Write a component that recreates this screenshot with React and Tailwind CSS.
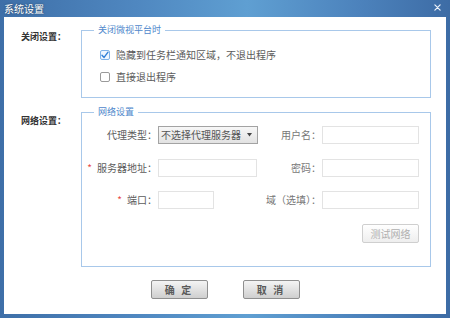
import React from "react";

const font = { fontFamily: '"Noto Sans CJK SC", "Noto Sans", sans-serif' };

function Field({ w }) {
  return <div className={`h-[18px] border border-[#e3e3e3] bg-white ${w}`} />;
}

function Star() {
  return <span className="text-[#e84a4a] mr-[5px]">*</span>;
}

export default function App() {
  return (
    <div
      className="w-[450px] h-[318px] flex flex-col bg-[linear-gradient(90deg,#3e6fa8_0%,#4f87c0_30%,#5f9fd2_55%,#4c82bc_80%,#3d6ca5_100%)] overflow-hidden"
      style={font}
    >
      {/* title bar */}
      <div className="h-[17px] flex items-center justify-between pl-[4px] pr-[9px]">
        <span className="text-[10px] leading-[12px] text-white [text-shadow:0_0_2px_rgba(0,0,0,0.5)]">系统设置</span>
        <svg width="7" height="7" viewBox="0 0 8 8" className="mt-[-3px]">
          <path d="M1 1 L7 7 M7 1 L1 7" stroke="#eef3fa" strokeWidth="1.4" strokeLinecap="round" />
        </svg>
      </div>

      {/* content */}
      <div className="mx-[4px] h-[297px] bg-white flex flex-col pt-[6px] text-[#5c5c5c]">
        {/* section 1 */}
        <div className="flex">
          <div className="w-[77px] pl-[17px] mt-[7px] text-[9px] leading-[14px] font-bold text-[#333]">关闭设置：</div>
          <fieldset className="w-[350px] border border-[#a8c8ea] pb-[12px]">
            <legend className="ml-[12px] px-[4px] text-[9px] leading-[14px] text-[#4f88cc]">关闭微视平台时</legend>
            <div className="mt-[10px] pl-[18px] h-[16px] flex items-center gap-[6px]">
              <div className="w-[10px] h-[10px] rounded-[2px] border border-[#7fb3e8] bg-[#eef6ff] flex items-center justify-center">
                <svg width="8" height="8" viewBox="0 0 8 8">
                  <path d="M1 4.2 L3.1 6.4 L7 1.2" stroke="#2f7fd6" strokeWidth="1.4" fill="none" strokeLinecap="round" strokeLinejoin="round" />
                </svg>
              </div>
              <span className="text-[10px] leading-[14px]">隐藏到任务栏通知区域，不退出程序</span>
            </div>
            <div className="mt-[6px] pl-[18px] h-[16px] flex items-center gap-[6px]">
              <div className="w-[10px] h-[10px] rounded-[2px] border border-[#9a9a9a] bg-white" />
              <span className="text-[10px] leading-[14px]">直接退出程序</span>
            </div>
          </fieldset>
        </div>

        {/* section 2 */}
        <div className="flex mt-[7px]">
          <div className="w-[77px] pl-[17px] mt-[9px] text-[9px] leading-[14px] font-bold text-[#333]">网络设置：</div>
          <fieldset className="w-[350px] border border-[#a8c8ea] pb-[23px]">
            <legend className="ml-[12px] px-[4px] text-[9px] leading-[14px] text-[#4f88cc]">网络设置</legend>
            <div className="text-[10px] leading-[14px]">
              <div className="mt-[7px] flex items-center h-[18px]">
                <div className="w-[76px] text-right pr-[1px]">代理类型：</div>
                <div className="w-[100px] h-[18px] border border-[#a3a3a3] bg-[linear-gradient(#f7f7f7,#e2e2e2)] flex items-center justify-between pl-[2px] pr-[5px] text-[#555]">
                  <span>不选择代理服务器</span>
                  <svg width="5" height="4" viewBox="0 0 5 4"><path d="M0 0 H5 L2.5 3.5 Z" fill="#444" /></svg>
                </div>
                <div className="w-[64px] text-right pr-[1px] text-[#777]">用户名：</div>
                <Field w="w-[97px]" />
              </div>
              <div className="mt-[15px] flex items-center h-[18px]">
                <div className="w-[76px] text-right pr-[1px]"><Star />服务器地址：</div>
                <Field w="w-[99px]" />
                <div className="w-[65px] text-right pr-[1px] text-[#777]">密码：</div>
                <Field w="w-[97px]" />
              </div>
              <div className="mt-[14px] flex items-center h-[18px]">
                <div className="w-[76px] text-right pr-[1px]"><Star />端口：</div>
                <Field w="w-[56px]" />
                <div className="w-[108px] text-right pr-[1px] text-[#777]">域（选填）：</div>
                <Field w="w-[97px]" />
              </div>
              <div className="mt-[15px] flex justify-end pr-[11px]">
                <div className="w-[57px] h-[19px] rounded-[2px] border border-[#cfcfcf] bg-[linear-gradient(#ffffff,#eeeeee)] flex items-center justify-center text-[#b0b0b0]">测试网络</div>
              </div>
            </div>
          </fieldset>
        </div>

        {/* buttons */}
        <div className="mt-[13px] flex justify-center gap-[35px] text-[10px]">
          <div className="w-[57px] h-[19px] rounded-[2px] border border-[#8f8f8f] bg-[linear-gradient(#f4f4f4,#cfcfcf)] flex items-center justify-center text-[#5a5a5a] font-semibold tracking-[2px]">确 定</div>
          <div className="w-[57px] h-[19px] rounded-[2px] border border-[#8f8f8f] bg-[linear-gradient(#f4f4f4,#cfcfcf)] flex items-center justify-center text-[#5a5a5a] font-semibold tracking-[2px]">取 消</div>
        </div>
      </div>
    </div>
  );
}
